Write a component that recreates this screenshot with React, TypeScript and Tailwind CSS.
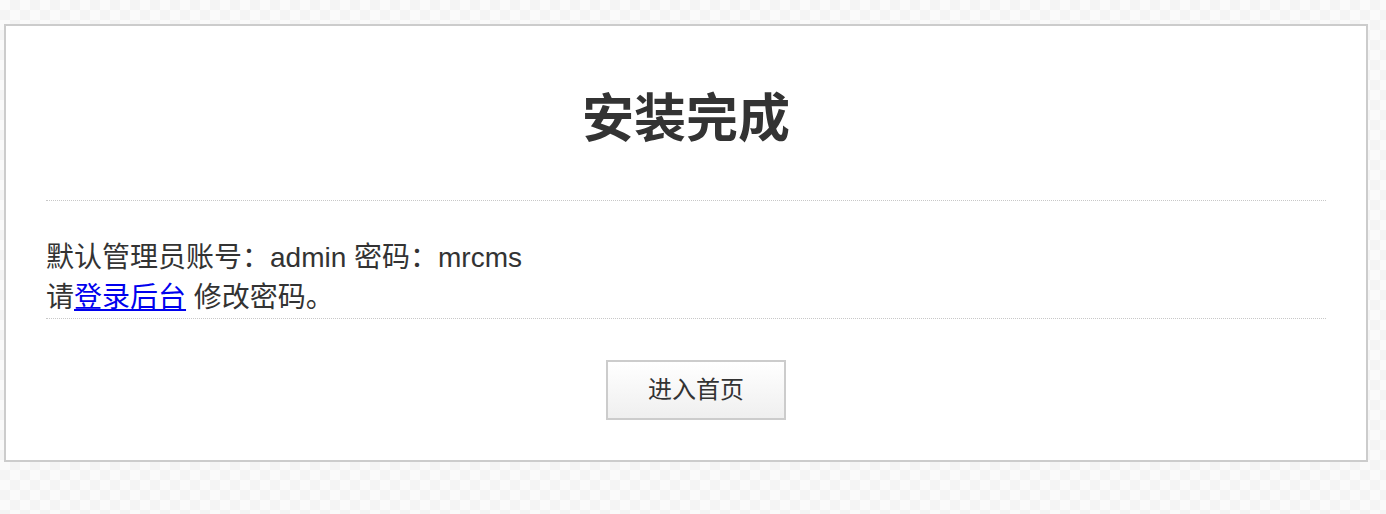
import React from "react";

export default function App() {
  return (
    <div
      className="min-h-screen w-full bg-[#fafafa] bg-[image:linear-gradient(45deg,#f4f4f4_25%,transparent_25%,transparent_75%,#f4f4f4_75%),linear-gradient(45deg,#f4f4f4_25%,transparent_25%,transparent_75%,#f4f4f4_75%)] bg-[length:20px_20px] [background-position:0_0,10px_10px] pt-[24px] px-[4px] pb-[52px]"
      style={{ fontFamily: '"Liberation Sans", "Noto Sans CJK SC", sans-serif' }}
    >
      <div className="w-[1364px] border-2 border-[#cccccc] bg-white px-[40px] pb-[40px] text-[#333333]">
        <div className="border-b border-dotted border-[#c8c8c8] pt-[63px] pb-[50px]">
          <h1 className="text-center text-[52px] font-bold leading-[61px]">安装完成</h1>
        </div>
        <div className="mt-[37px] border-b border-dotted border-[#c8c8c8] text-[28px] leading-[40px]">
          <p>默认管理员账号：admin 密码：mrcms</p>
          <p>
            请<a href="#" className="text-[#0000ee] underline">登录后台</a> 修改密码。
          </p>
        </div>
        <div className="mt-[41px] flex justify-center pl-[20px]">
          <button className="h-[60px] w-[180px] border-2 border-[#cccccc] bg-[linear-gradient(#ffffff,#efefef)] text-[24px] text-[#333333]">
            进入首页
          </button>
        </div>
      </div>
    </div>
  );
}
